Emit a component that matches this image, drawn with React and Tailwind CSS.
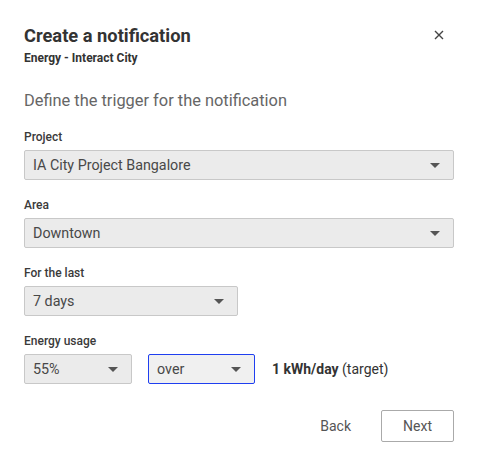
import React from 'react';

const Caret = () => (
    <svg width="10" height="5" viewBox="0 0 10 5" className="shrink-0">
        <path d="M0 0 L10 0 L5 5 Z" fill="#555" />
    </svg>
);

const Select = ({ value, width, active }) => (
    <div
        className={`flex items-center justify-between h-[30px] pl-[8px] pr-[13px] rounded-[2px] border text-[14.3px] text-[#484848] ${active ? 'border-[#1f3ff0] bg-[#f0f0f0]' : 'border-[#c8c8c8] bg-[#ebebeb]'} ${width}`}
    >
        <span>{value}</span>
        <Caret />
    </div>
);

const Label = ({ children }) => (
    <div className="text-[12px] font-medium text-[#3a3a3a] leading-none mb-[7px]">{children}</div>
);

export default function App() {
    return (
        <div className="w-[478px] h-[462px] bg-white font-['Roboto',sans-serif] px-[24px] pt-[26px]">
            <div className="flex justify-between items-start">
                <div>
                    <h1 className="text-[18.3px] font-bold text-[#333] leading-[20px]">Create a notification</h1>
                    <div className="text-[12px] font-bold text-[#333] mt-[6px] leading-none">Energy - Interact City</div>
                </div>
                <button className="mr-[10px] mt-[4px] text-[#444]">
                    <svg width="10" height="10" viewBox="0 0 10 10">
                        <path d="M1 1 L9 9 M9 1 L1 9" stroke="#444" strokeWidth="1.4" />
                    </svg>
                </button>
            </div>

            <div className="mt-[29px] text-[16.4px] text-[#666] leading-none">Define the trigger for the notification</div>

            <div className="mt-[22px]">
                <Label>Project</Label>
                <Select value="IA City Project Bangalore" width="w-[430px]" />
            </div>

            <div className="mt-[19px]">
                <Label>Area</Label>
                <Select value="Downtown" width="w-[430px]" />
            </div>

            <div className="mt-[19px]">
                <Label>For the last</Label>
                <Select value="7 days" width="w-[214px]" />
            </div>

            <div className="mt-[19px]">
                <Label>Energy usage</Label>
                <div className="flex items-center">
                    <Select value="55%" width="w-[108px]" />
                    <div className="ml-[16px]">
                        <Select value="over" width="w-[107px]" active />
                    </div>
                    <div className="ml-[17px] text-[14px] text-[#333]">
                        <span className="font-bold">1 kWh/day</span> (target)
                    </div>
                </div>
            </div>

            <div className="flex justify-end items-center mt-[26px]">
                <button className="text-[14px] text-[#555] mr-[30px]">Back</button>
                <button className="w-[73px] h-[32px] border border-[#aaa] rounded-[2px] text-[14px] text-[#555]">Next</button>
            </div>
        </div>
    );
}
